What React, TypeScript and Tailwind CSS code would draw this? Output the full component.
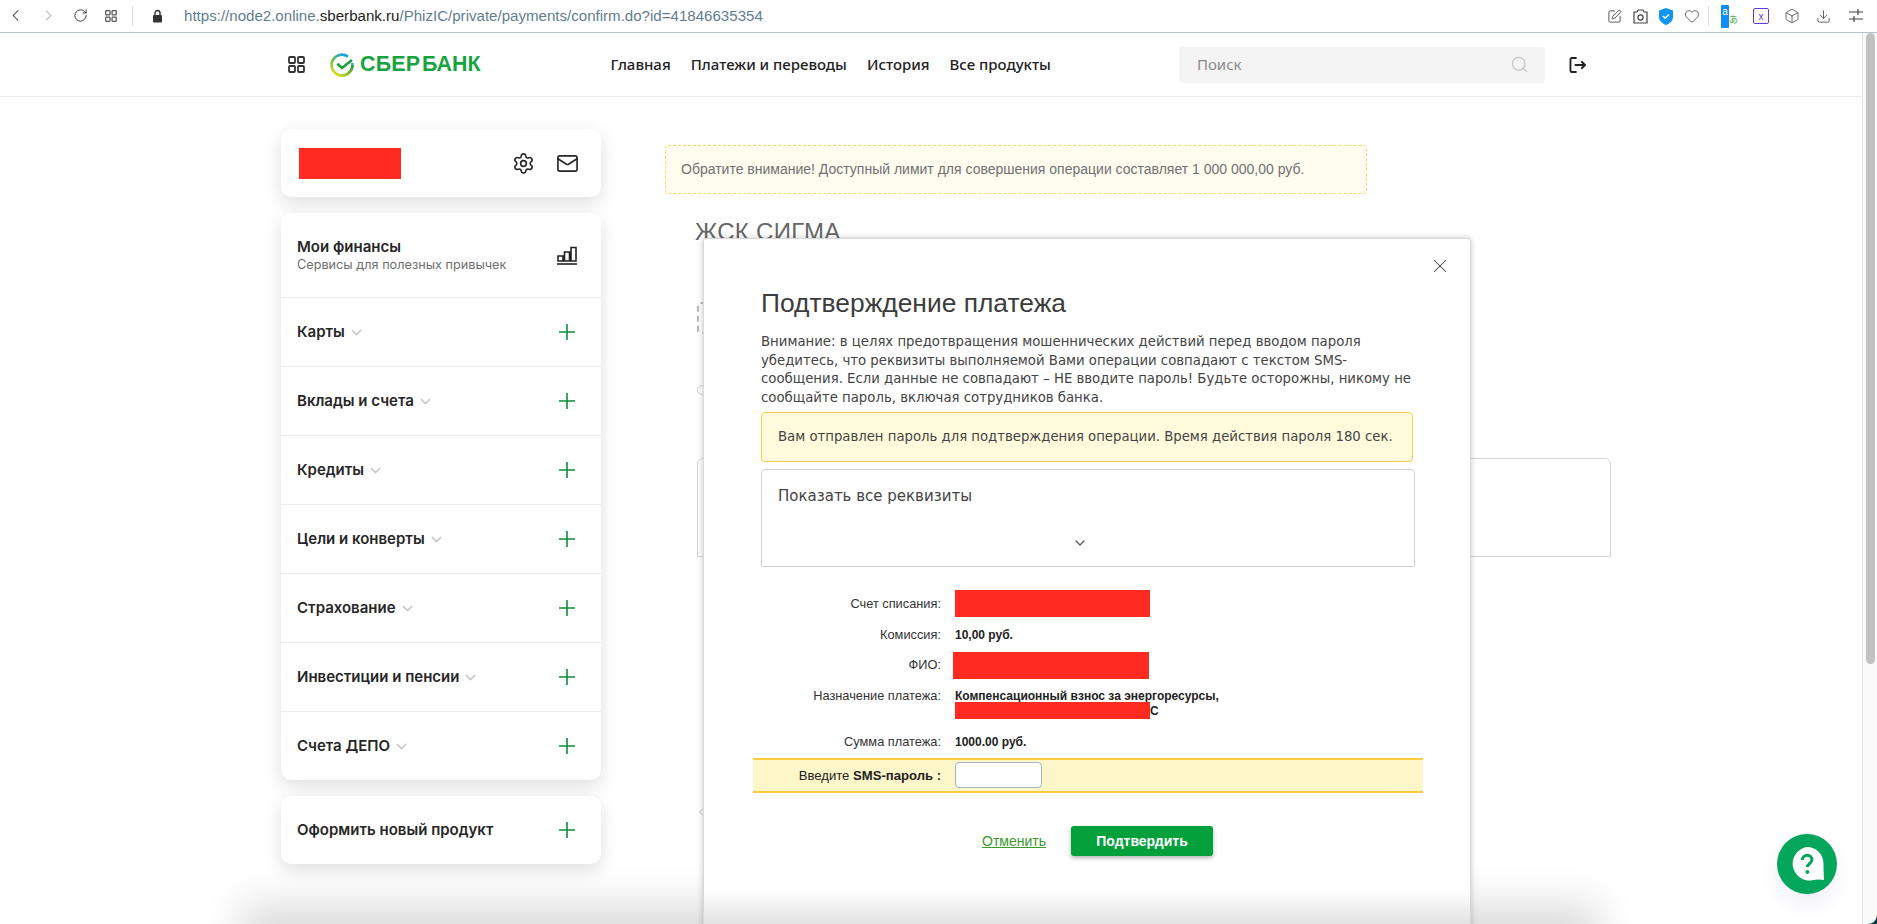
import React from 'react';
import {
  ChevronLeft,
  ChevronRight,
  ChevronDown,
  RotateCw,
  SquarePen,
  Heart,
  Box,
  Download,
  Settings,
  Mail,
  Search,
  X,
} from 'lucide-react';

const sideFont = "font-['Inter','Noto_Sans',sans-serif]";
const arial = "font-['Liberation_Sans',Arial,sans-serif]";
const dejavu = "font-['DejaVu_Sans',Verdana,sans-serif]";

const menuItems = [
  'Карты',
  'Вклады и счета',
  'Кредиты',
  'Цели и конверты',
  'Страхование',
  'Инвестиции и пенсии',
  'Счета ДЕПО',
];

const GridIcon = ({ size = 17, stroke = '#333' }: { size?: number; stroke?: string }) => (
  <svg width={size} height={size} viewBox="0 0 17 17" fill="none" stroke={stroke} strokeWidth="1.8">
    <rect x="1" y="1" width="6" height="6" rx="1" />
    <rect x="10" y="1" width="6" height="6" rx="1" />
    <rect x="1" y="10" width="6" height="6" rx="1" />
    <rect x="10" y="10" width="6" height="6" rx="1" />
  </svg>
);

const PlusIcon = () => (
  <svg width="16" height="16" viewBox="0 0 16 16" stroke="#0b8f3a" strokeWidth="1.6">
    <path d="M8 0v16M0 8h16" />
  </svg>
);

const SberLogo = () => (
  <svg width="24" height="24" viewBox="0 0 24 24" fill="none">
    <defs>
      <linearGradient id="sberA" x1="0" y1="1" x2="0.6" y2="0">
        <stop offset="0" stopColor="#f2e313" />
        <stop offset="0.6" stopColor="#62c04a" />
        <stop offset="1" stopColor="#1ba1e2" />
      </linearGradient>
      <linearGradient id="sberB" x1="0" y1="1" x2="1" y2="0">
        <stop offset="0" stopColor="#d6e020" />
        <stop offset="1" stopColor="#1fa03a" />
      </linearGradient>
    </defs>
    <path d="M18 3.6A10.4 10.4 0 1 0 22.2 10" stroke="url(#sberA)" strokeWidth="2.6" strokeLinecap="butt" />
    <path d="M22.4 12A10.4 10.4 0 0 1 7 21.2" stroke="url(#sberB)" strokeWidth="2.6" />
    <path d="M7.4 10.8l4.6 4.2L22 7" stroke="#1fa03a" strokeWidth="2.6" />
  </svg>
);

const BrowserBar = () => (
  <div className="flex h-[33px] items-center border-b border-[#b5c0cc] bg-white">
    <div className="flex w-[1600px] items-center pl-[6px]">
      <ChevronLeft size={19} strokeWidth={1.3} className="text-[#333]" />
      <ChevronRight size={19} strokeWidth={1.3} className="ml-[14px] text-[#aaa]" />
      <RotateCw size={15} strokeWidth={1.5} className="ml-[15px] text-[#333]" />
      <span className="ml-[17px]">
        <GridIcon size={12} stroke="#555" />
      </span>
      <span className="ml-[15px] h-[20px] w-px bg-[#ddd]" />
      <svg width="11" height="14" viewBox="0 0 11 14" className="ml-[19px]">
        <path d="M3 6V4a2.5 2.5 0 0 1 5 0v2" fill="none" stroke="#333" strokeWidth="1.4" />
        <rect x="1" y="6" width="9" height="7.5" rx="1" fill="#333" />
      </svg>
      <span className={`${arial} ml-[21px] text-[15.08px] text-[#5f7d90]`}>
        https://node2.online.<span className="text-[#222]">sberbank.ru</span>/PhizIC/private/payments/confirm.do?id=41846635354
      </span>
    </div>
    <div className="flex items-center text-[#444]">
      <SquarePen size={15} strokeWidth={1.4} className="ml-[7px]" />
      <svg width="15" height="17" viewBox="0 0 15 17" fill="none" stroke="#444" strokeWidth="1.2" className="ml-[11px]">
        <path d="M1 4h3l1-2h5l1 2h3v11H1z" />
        <circle cx="7.5" cy="9.5" r="2.6" />
      </svg>
      <svg width="14" height="17" viewBox="0 0 14 17" className="ml-[11px]">
        <path d="M7 0l7 2.5V9c0 4-3.5 6.5-7 8-3.5-1.5-7-4-7-8V2.500z" fill="#0f95f4" />
        <path d="M4 8l2.2 2.200L10 6.500" stroke="#fff" strokeWidth="1.6" fill="none" />
      </svg>
      <Heart size={16} strokeWidth={1.2} className="ml-[11px]" />
      <span className="ml-[8px] h-[20px] w-px bg-[#ddd]" />
      <span className="relative ml-[12px] flex h-[23px] w-[16px] items-start">
        <span className={`${arial} flex h-[23px] w-[8px] items-start justify-center rounded-[1px] bg-[#0f8cf5] text-[10px] leading-[14px] text-white`}>
          a
        </span>
        <span className="absolute left-[8px] top-[9px] font-['Noto_Sans_CJK_JP',sans-serif] text-[9px] leading-[12px] text-[#3aa53a]">
          あ
        </span>
      </span>
      <span className={`${arial} ml-[16px] flex h-[16px] w-[16px] items-center justify-center rounded-[2px] border border-[#5a3fe0] text-[10px] text-[#5a3fe0]`}>
        x
      </span>
      <Box size={16} strokeWidth={1.2} className="ml-[15px]" />
      <Download size={15} strokeWidth={1.3} className="ml-[16px]" />
      <svg width="14" height="16" viewBox="0 0 14 16" stroke="#444" strokeWidth="1.2" className="ml-[18px]">
        <path d="M0 4h14M0 11h14M9 1v6M5 8v6" />
      </svg>
    </div>
  </div>
);

const SiteHeader = () => (
  <div className="flex h-[64px] items-center border-b border-[#ececec] pl-[288px]">
    <GridIcon />
    <span className="ml-[25px] flex items-center">
      <SberLogo />
      <span className={`${arial} ml-[6px] text-[21.4px] font-bold leading-none tracking-[0.2px] text-[#16a43f]`}>
        СБЕР<span className="tracking-normal">&#8202;БАНК</span>
      </span>
    </span>
    <nav className="ml-[130px] flex gap-[20px] font-['Noto_Sans',sans-serif] text-[15px] font-medium text-[#222]">
      <span>Главная</span>
      <span>Платежи и переводы</span>
      <span>История</span>
      <span>Все продукты</span>
    </nav>
    <div className="ml-[128px] flex h-[36px] w-[366px] items-center justify-between rounded-[4px] bg-[#f4f4f4] pl-[18px] pr-[16px] font-['Noto_Sans',sans-serif] text-[15px] text-[#8a8a8a]">
      <span>Поиск</span>
      <Search size={19} strokeWidth={1.6} className="text-[#c4c4c4]" />
    </div>
    <svg width="18" height="16" viewBox="0 0 19 17" fill="none" stroke="#222" strokeWidth="2" className="ml-[24px]">
      <path d="M8 1H3a1.500 1.500 0 0 0-1.500 1.500v12A1.500 1.500 0 0 0 3 16h5" />
      <path d="M6 8.500h11M13 4.500l4 4-4 4" />
    </svg>
  </div>
);

const Card = ({ className, children }: { className?: string; children: React.ReactNode }) => (
  <div className={`rounded-[10px] bg-white shadow-[0_6px_18px_rgba(0,0,0,0.13)] ${className ?? ''}`}>{children}</div>
);

const Sidebar = () => (
  <aside className={`${sideFont} w-[320px] shrink-0 text-[#262626]`}>
    <Card className="flex h-[68px] items-center justify-between pl-[18px] pr-[22px]">
      <div className="h-[31px] w-[102px] bg-[#ff2a20]" />
      <div className="flex items-center gap-[21px]">
        <Settings size={23} strokeWidth={1.7} />
        <Mail size={23} strokeWidth={1.7} />
      </div>
    </Card>
    <Card className="mt-[16px]">
      <div className="flex h-[85px] items-center justify-between border-b border-[#ececec] pl-[16px] pr-[24px]">
        <div>
          <div className="text-[15px] font-semibold leading-[18px]">Мои финансы</div>
          <div className="text-[12.7px] leading-[17px] text-[#6e6e6e]">Сервисы для полезных привычек</div>
        </div>
        <svg width="20" height="20" viewBox="0 0 20 20" fill="none" stroke="#222" strokeWidth="1.6">
          <path d="M0 19h20" />
          <path d="M1 16v-5h5v5zM7.500 16V7h5v9zM14 16V2.500h5V16z" />
        </svg>
      </div>
      {menuItems.map((label, idx) => (
        <div
          key={label}
          className={`flex items-center justify-between pl-[16px] pr-[26px] ${idx < menuItems.length - 1 ? 'h-[69px] border-b border-[#ececec]' : 'h-[68px]'}`}
        >
          <span className="flex items-center gap-[3px]">
            <span className="text-[15px] font-semibold">{label}</span>
            <ChevronDown size={17} strokeWidth={2} className="text-[#c8c8c8]" />
          </span>
          <PlusIcon />
        </div>
      ))}
    </Card>
    <Card className="mt-[16px] flex h-[68px] items-center justify-between pl-[16px] pr-[26px]">
      <span className="text-[15px] font-semibold">Оформить новый продукт</span>
      <PlusIcon />
    </Card>
  </aside>
);

const BackgroundContent = () => (
  <div className="ml-[64px] flex-1 pt-[16px]">
    <div className={`${arial} flex h-[49px] w-[702px] items-center rounded-[3px] border border-dashed border-[#f7d96b] bg-[#fffdf0] pl-[15px] text-[14px] text-[#707070]`}>
      Обратите внимание! Доступный лимит для совершения операции составляет 1 000 000,00 руб.
    </div>
    <div className={`${arial} ml-[30px] mt-[24px] text-[24px] leading-[28px] tracking-[0.3px] text-[#666]`}>ЖСК СИГМА</div>
    <div className="ml-[32px] mt-[56px] h-[32px] w-[40px] rounded-[4px] border-2 border-dashed border-[#bbb]" />
    <div className="ml-[32px] mt-[51px] h-[10px] w-[10px] rounded-full border border-[#ccc]" />
    <div className="ml-[32px] mt-[63px] h-[99px] w-[914px] rounded-t-[6px] border border-[#d5d5d5]" />
    <ChevronLeft size={12} strokeWidth={1.5} className="ml-[30px] mt-[249px] text-[#aaa]" />
  </div>
);

const DetailRow = ({ label, className, children }: { label: React.ReactNode; className: string; children?: React.ReactNode }) => (
  <div className={`flex ${className}`}>
    <div className="w-[247px] shrink-0 text-right text-[12.8px] leading-[16px] text-[#333]">{label}</div>
    <div className="ml-[14px] text-[12px] font-bold leading-[16px] text-[#222]">{children}</div>
  </div>
);

const ConfirmModal = () => (
  <div className={`${arial} absolute left-[703px] top-[238px] h-[700px] w-[768px] rounded-[3px] border border-[#d8d8d8] bg-white shadow-[0_0_6px_rgba(0,0,0,0.22)]`}>
    <X size={22} strokeWidth={1.1} className="absolute right-[19px] top-[16px] text-[#444]" />
    <div className="pl-[57px] pt-[50px]">
      <h2 className="text-[26.4px] font-normal leading-[28px] text-[#3c3c3c]">Подтверждение платежа</h2>
      <p className={`${dejavu} mt-[16px] w-[656px] text-[13.27px] leading-[18.500px] text-[#444]`}>
        Внимание: в целях предотвращения мошеннических действий перед вводом пароля убедитесь, что реквизиты выполняемой Вами операции совпадают с текстом SMS-сообщения. Если данные не совпадают – НЕ вводите пароль! Будьте осторожны, никому не сообщайте пароль, включая сотрудников банка.
      </p>
      <div className={`${dejavu} mt-[5px] flex h-[50px] w-[652px] items-center rounded-[4px] border border-[#f7d04f] bg-[#fffbdc] pl-[16px] text-[13.25px] text-[#444]`}>
        Вам отправлен пароль для подтверждения операции. Время действия пароля 180 сек.
      </div>
      <div className="mt-[7px] flex h-[98px] w-[654px] flex-col rounded-t-[4px] border border-[#d2d2d2] pl-[16px] pt-[16px]">
        <span className={`${dejavu} text-[15px] leading-[20px] text-[#444]`}>Показать все реквизиты</span>
        <ChevronDown size={16} strokeWidth={1.8} className="ml-[294px] mt-[29px] text-[#555]" />
      </div>
    </div>
    <div className="-ml-[10px] mt-[21px]">
      <DetailRow label="Счет списания:" className="h-[31px] items-center">
        <div className="h-[27px] w-[195px] bg-[#ff2a20]" />
      </DetailRow>
      <DetailRow label="Комиссия:" className="h-[31px] items-center">
        10,00 руб.
      </DetailRow>
      <DetailRow label="ФИО:" className="h-[30px] items-center">
        <div className="-ml-[2px] h-[27px] w-[196px] bg-[#ff2a20]" />
      </DetailRow>
      <DetailRow label="Назначение платежа:" className="h-[49px] pt-[8px]">
        <div>Компенсационный взнос за энергоресурсы,</div>
        <div className="-mt-[2px] flex h-[17px] items-center">
          <span className="h-[17px] w-[195px] bg-[#ff2a20]" />С
        </div>
      </DetailRow>
      <DetailRow label="Сумма платежа:" className="h-[25px] items-center">
        1000.00 руб.
      </DetailRow>
    </div>
    <div className="ml-[49px] mt-[4px] flex h-[35px] w-[670px] items-center border-y-2 border-[#f9cb3f] bg-[#fcf6c9]">
      <div className="w-[188px] text-right text-[13.1px] text-[#222]">
        Введите <b>SMS-пароль :</b>
      </div>
      <div className="ml-[14px] -mt-[1px] h-[26px] w-[87px] rounded-[4px] border border-[#a3b3c2] bg-white" />
    </div>
    <div className="mt-[33px] flex items-center pl-[278px]">
      <span className="text-[14px] text-[#3a9a2e] underline">Отменить</span>
      <button className="ml-[25px] h-[30px] w-[142px] rounded-[3px] bg-[#03a03c] text-[14px] font-bold text-white shadow-[0_2px_4px_rgba(0,0,0,0.3)]">
        Подтвердить
      </button>
    </div>
  </div>
);

const ChatButton = () => (
  <div className="absolute left-[1777px] top-[834px] flex h-[60px] w-[60px] items-center justify-center rounded-full bg-[#03a65b] shadow-[0_10px_20px_rgba(70,70,160,0.08)]">
    <svg width="34" height="34" viewBox="0 0 34 34">
      <path d="M17 0a16.500 16.500 0 0 1 16.500 16.500c0 5 .2 11 .5 16.500-4-1-8-.5-12 .3A16.700 16.700 0 0 1 17 0z" fill="#fff" />
      <path
        d="M12.500 13a4.700 4.700 0 0 1 9.400 0c0 3.500-4.500 3.500-4.500 7"
        fill="none"
        stroke="#03a65b"
        strokeWidth="3"
      />
      <circle cx="17.400" cy="25" r="2" fill="#03a65b" />
    </svg>
  </div>
);

export default function App() {
  return (
    <div className="relative h-[924px] w-[1877px] overflow-hidden bg-white">
      <BrowserBar />
      <div className="flex h-[891px]">
        <div className="min-w-0 flex-1">
          <SiteHeader />
          <div className="flex pl-[281px] pt-[32px]">
            <Sidebar />
            <BackgroundContent />
          </div>
        </div>
        <div className="w-[15px] shrink-0 border-l border-[#e2e2e2] bg-[#fafafa] pl-[3px]">
          <div className="h-[631px] w-[9px] rounded-full bg-[#c2c2c2]" />
        </div>
      </div>
      <div className="absolute left-[265px] top-[928px] h-[30px] w-[1310px] shadow-[0_0_40px_24px_rgba(0,0,0,0.14)]" />
      <ConfirmModal />
      <div className="absolute left-[704px] top-[890px] h-[34px] w-[766px] bg-gradient-to-b from-transparent to-[#e2e2e2]" />
      <ChatButton />
      <svg width="9" height="10" viewBox="0 0 9 10" className="absolute left-[1868px] top-[914px]">
        <path d="M9 0v10H0c5 0 9-4 9-10z" fill="#0d3d4d" />
      </svg>
    </div>
  );
}
